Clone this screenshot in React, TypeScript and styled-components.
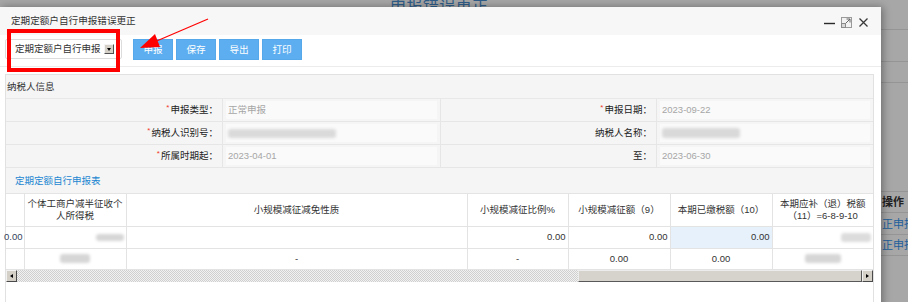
import React from "react";
import styled, { createGlobalStyle } from "styled-components";

const GlobalStyle = createGlobalStyle`
  html, body {
    margin: 0;
    padding: 0;
    background: #a7a7a7;
  }
  body {
    font-family: "Liberation Sans", "Noto Sans CJK SC", sans-serif;
    font-size: 9.5px;
    color: #333;
  }
  * {
    box-sizing: border-box;
  }
`;

const Screen = styled.div`
  position: relative;
  width: 908px;
  height: 302px;
  overflow: hidden;
  background: #a7a7a7;
`;

/* page behind the dimmed overlay */
const PageTitle = styled.div`
  position: absolute;
  left: 390px;
  top: -1px;
  font-size: 16px;
  line-height: 16px;
  letter-spacing: 0.4px;
  color: #2f5d89;
  white-space: nowrap;
`;

const BackTable = styled.div`
  position: absolute;
  left: 874px;
  top: 0;
  width: 40px;
  height: 302px;
  display: flex;
  flex-direction: column;
`;

const BackRow = styled.div<{ $h: number; $link?: boolean; $head?: boolean }>`
  height: ${(p) => p.$h}px;
  flex: none;
  border-bottom: 1px solid #959595;
  display: flex;
  align-items: center;
  padding-left: 8px;
  font-size: 11px;
  line-height: 12px;
  white-space: nowrap;
  color: ${(p) => (p.$link ? "#22609c" : "#222")};
  font-weight: ${(p) => (p.$head ? 700 : 400)};
`;

/* dialog */
const Dialog = styled.section`
  position: absolute;
  left: 0;
  top: 7px;
  width: 881px;
  height: 310px;
  background: #fff;
  box-shadow: 2px 0 8px rgba(0, 0, 0, 0.35);
  display: flex;
  flex-direction: column;
`;

const TitleBar = styled.header`
  height: 28px;
  flex: none;
  background: #f7f7f7;
  display: flex;
  align-items: center;
  justify-content: space-between;
  padding: 0 12px 0 11px;
  font-size: 9.6px;
  line-height: 12px;
  color: #333;
`;

const WinControls = styled.div`
  display: flex;
  align-items: center;
  gap: 6px;
  padding-top: 2px;
`;

const Toolbar = styled.div`
  height: 32px;
  flex: none;
  display: flex;
  align-items: flex-start;
  padding: 4px 0 0 5px;
  border-bottom: 1px solid #ececec;
`;

const Select = styled.div`
  width: 117px;
  height: 20px;
  border: 1px solid #dcdcdc;
  border-radius: 2px;
  display: flex;
  align-items: center;
  justify-content: space-between;
  padding: 0 7px 0 9px;
  color: #333;
  line-height: 12px;
  white-space: nowrap;
`;

const DropBtn = styled.span`
  width: 10px;
  height: 10px;
  background: #d4d0c8;
  border: 1px solid;
  border-color: #f4f4f4 #505050 #505050 #f4f4f4;
  display: flex;
  align-items: center;
  justify-content: center;
  &::after {
    content: "";
    border-style: solid;
    border-width: 3px 2.5px 0 2.5px;
    border-color: #000 transparent transparent transparent;
  }
`;

const ButtonGroup = styled.div`
  display: flex;
  gap: 3px;
  margin-left: 11px;
`;

const ToolButton = styled.button`
  width: 40px;
  height: 21px;
  padding: 0;
  border: 1px solid #55a8ea;
  background: #5caef0;
  color: #fff;
  font-family: inherit;
  font-size: 9.6px;
  line-height: 12px;
`;

const Body = styled.div`
  flex: 1;
  display: flex;
  padding: 7px 7px 0 5px;
`;

const Panel = styled.div`
  flex: 1;
  display: flex;
  flex-direction: column;
  border: 1px solid #e1e1e1;
  background: #f5f5f5;
`;

const PanelHeader = styled.div`
  height: 24px;
  flex: none;
  display: flex;
  align-items: center;
  padding-left: 1px;
  border-bottom: 1px solid #e8e8e8;
  line-height: 12px;
  color: #333;
`;

const FormGrid = styled.div`
  display: grid;
  grid-template-columns: 217px 218px 216px 1fr;
  grid-auto-rows: 23px;
`;

const LabelCell = styled.div`
  display: flex;
  align-items: center;
  justify-content: flex-end;
  padding-right: 4px;
  border-right: 1px solid #e6e6e6;
  border-bottom: 1px solid #e6e6e6;
  color: #222;
  line-height: 12px;
  white-space: nowrap;
`;

const Star = styled.span`
  color: #f03c2c;
  font-size: 8px;
  margin-right: 1px;
  position: relative;
  top: -2px;
`;

const ValueCell = styled.div<{ $last?: boolean }>`
  display: flex;
  padding: 2px 3px;
  border-right: ${(p) => (p.$last ? "none" : "1px solid #e6e6e6")};
  border-bottom: 1px solid #e6e6e6;
`;

const Field = styled.div`
  flex: 1;
  display: flex;
  align-items: center;
  padding-left: 2px;
  background: #fafafa;
  color: #a6a6a6;
  line-height: 12px;
`;

const Blur = styled.span<{ $w: number; $h: number; $tone?: string }>`
  display: inline-block;
  width: ${(p) => p.$w}px;
  height: ${(p) => p.$h}px;
  background: ${(p) => p.$tone ?? "#d6d6d6"};
  filter: blur(1.6px);
  border-radius: 3px;
  vertical-align: middle;
`;

const LinkRow = styled.div`
  height: 26px;
  flex: none;
  display: flex;
  align-items: center;
  padding-left: 9px;
  color: #1d87d2;
  line-height: 12px;
  border-bottom: 1px solid #e4e4e4;
`;

const TableArea = styled.div`
  flex: 1;
  background: #fff;
`;

const Grid = styled.table`
  width: 867px;
  table-layout: fixed;
  border-collapse: collapse;
  font-size: 9.5px;
  line-height: 12px;
`;

const HeadCell = styled.th`
  height: 32px;
  padding: 0 2px;
  font-weight: 400;
  color: #333;
  text-align: center;
  border-right: 1px solid #e3e3e3;
  border-bottom: 1px solid #e3e3e3;
  &:last-child {
    border-right: none;
  }
`;

const Cell = styled.td<{ $align?: "left" | "right" | "center"; $hl?: boolean; $h: number }>`
  height: ${(p) => p.$h}px;
  padding: 0 2px;
  text-align: ${(p) => p.$align ?? "center"};
  white-space: nowrap;
  color: #333;
  background: ${(p) => (p.$hl ? "#e7f1fc" : "transparent")};
  border-right: 1px solid #e3e3e3;
  border-bottom: 1px solid #e3e3e3;
  &:last-child {
    border-right: none;
  }
`;

const EdgeCell = styled(Cell)`
  direction: rtl;
  color: #34445e;
  padding-right: 1px;
`;

const ScrollBar = styled.div`
  display: flex;
  height: 12px;
`;

const ScrollArrow = styled.div<{ $dir: "left" | "right" }>`
  width: 11px;
  height: 12px;
  flex: none;
  background: #d4d0c8;
  border: 1px solid;
  border-color: #f2f2f2 #4a4a4a #4a4a4a #f2f2f2;
  display: flex;
  align-items: center;
  justify-content: center;
  &::after {
    content: "";
    border-style: solid;
    border-width: ${(p) => (p.$dir === "left" ? "2.5px 3px 2.5px 0" : "2.5px 0 2.5px 3px")};
    border-color: ${(p) =>
      p.$dir === "left"
        ? "transparent #000 transparent transparent"
        : "transparent transparent transparent #000"};
  }
`;

const Track = styled.div`
  flex: 1;
  background-color: #eeeeee;
  background-image: repeating-conic-gradient(#cfcfcf 0 25%, #f1f1f1 0 50%);
  background-size: 2px 2px;
`;

const Thumb = styled.div`
  width: 284px;
  flex: none;
  background: #d6d3cc;
  border: 1px solid;
  border-color: #ececec #595959 #595959 #ececec;
`;

/* annotations drawn over the screenshot */
const Highlight = styled.div`
  position: absolute;
  left: 7px;
  top: 29px;
  width: 113px;
  height: 43px;
  border: 4px solid #ff0000;
`;

const ArrowLayer = styled.svg`
  position: absolute;
  left: 0;
  top: 0;
  pointer-events: none;
`;

const MinIcon = () => (
  <svg width="11" height="11" viewBox="0 0 11 11">
    <path d="M0 6.5 H11" stroke="#2a2a2a" strokeWidth="1.4" />
  </svg>
);

const RestoreIcon = () => (
  <svg width="11" height="11" viewBox="0 0 11 11">
    <rect x="0.5" y="0.5" width="10" height="10" fill="#f2f2f2" stroke="#9a9a9a" />
    <path d="M4 7 L9 2 M5.5 2 H9 V5.5" stroke="#666" fill="none" strokeWidth="1" />
    <rect x="0.5" y="6.5" width="4" height="4" fill="#d8d8d8" stroke="#8a8a8a" />
  </svg>
);

const CloseIcon = () => (
  <svg width="11" height="11" viewBox="0 0 11 11">
    <path d="M1.5 1.5 L9.5 9.5 M9.5 1.5 L1.5 9.5" stroke="#3a3a3a" strokeWidth="1.3" />
  </svg>
);

const headers = [
  "",
  <>
    个体工商户减半征收个
    <br />
    人所得税
  </>,
  "小规模减征减免性质",
  "小规模减征比例%",
  "小规模减征额（9）",
  "本期已缴税额（10）",
  <>
    本期应补（退）税额
    <br />
    （11）=6-8-9-10
  </>,
];

const colWidths = [18, 102, 341, 101, 102, 102, 101];

export default function App() {
  return (
    <Screen>
      <GlobalStyle />
      <PageTitle>申报错误更正</PageTitle>
      <BackTable>
        <BackRow $h={30} />
        <BackRow $h={32} />
        <BackRow $h={21} />
        <BackRow $h={109} />
        <BackRow $h={21} $head>
          操作
        </BackRow>
        <BackRow $h={22} $link>
          正申报
        </BackRow>
        <BackRow $h={21} $link>
          正申报
        </BackRow>
      </BackTable>

      <Dialog>
        <TitleBar>
          <span>定期定额户自行申报错误更正</span>
          <WinControls>
            <MinIcon />
            <RestoreIcon />
            <CloseIcon />
          </WinControls>
        </TitleBar>

        <Toolbar>
          <Select>
            <span>定期定额户自行申报</span>
            <DropBtn />
          </Select>
          <ButtonGroup>
            <ToolButton>申报</ToolButton>
            <ToolButton>保存</ToolButton>
            <ToolButton>导出</ToolButton>
            <ToolButton>打印</ToolButton>
          </ButtonGroup>
        </Toolbar>

        <Body>
          <Panel>
            <PanelHeader>纳税人信息</PanelHeader>
            <FormGrid>
              <LabelCell>
                <Star>*</Star>申报类型：
              </LabelCell>
              <ValueCell>
                <Field>正常申报</Field>
              </ValueCell>
              <LabelCell>
                <Star>*</Star>申报日期：
              </LabelCell>
              <ValueCell $last>
                <Field>2023-09-22</Field>
              </ValueCell>

              <LabelCell>
                <Star>*</Star>纳税人识别号：
              </LabelCell>
              <ValueCell>
                <Field>
                  <Blur $w={108} $h={9} $tone="#dadada" />
                </Field>
              </ValueCell>
              <LabelCell>纳税人名称：</LabelCell>
              <ValueCell $last>
                <Field>
                  <Blur $w={78} $h={10} $tone="#d9d9d9" />
                </Field>
              </ValueCell>

              <LabelCell>
                <Star>*</Star>所属时期起：
              </LabelCell>
              <ValueCell>
                <Field>2023-04-01</Field>
              </ValueCell>
              <LabelCell>至：</LabelCell>
              <ValueCell $last>
                <Field>2023-06-30</Field>
              </ValueCell>
            </FormGrid>

            <LinkRow>定期定额自行申报表</LinkRow>

            <TableArea>
              <Grid>
                <colgroup>
                  {colWidths.map((w, i) => (
                    <col key={i} style={{ width: w }} />
                  ))}
                </colgroup>
                <thead>
                  <tr>
                    {headers.map((h, i) => (
                      <HeadCell key={i}>{h}</HeadCell>
                    ))}
                  </tr>
                </thead>
                <tbody>
                  <tr>
                    <EdgeCell $h={22} $align="right">
                      0.00
                    </EdgeCell>
                    <Cell $h={22} $align="right">
                      <Blur $w={28} $h={7} />
                    </Cell>
                    <Cell $h={22} />
                    <Cell $h={22} $align="right">
                      0.00
                    </Cell>
                    <Cell $h={22} $align="right">
                      0.00
                    </Cell>
                    <Cell $h={22} $align="right" $hl>
                      0.00
                    </Cell>
                    <Cell $h={22} $align="right">
                      <Blur $w={30} $h={9} $tone="#dcdcdc" />
                    </Cell>
                  </tr>
                  <tr>
                    <Cell $h={21} />
                    <Cell $h={21}>
                      <Blur $w={30} $h={9} />
                    </Cell>
                    <Cell $h={21}>-</Cell>
                    <Cell $h={21}>-</Cell>
                    <Cell $h={21}>0.00</Cell>
                    <Cell $h={21}>0.00</Cell>
                    <Cell $h={21}>
                      <Blur $w={36} $h={9} />
                    </Cell>
                  </tr>
                </tbody>
              </Grid>
              <ScrollBar>
                <ScrollArrow $dir="left" />
                <Track />
                <Thumb />
                <ScrollArrow $dir="right" />
              </ScrollBar>
            </TableArea>
          </Panel>
        </Body>
      </Dialog>

      <Highlight />
      <ArrowLayer width="908" height="302" viewBox="0 0 908 302">
        <path d="M208 19 L152 43" stroke="#ff0000" strokeWidth="1.2" />
        <polygon points="140,48 155,34 160,47" fill="#ff0000" />
      </ArrowLayer>
    </Screen>
  );
}
